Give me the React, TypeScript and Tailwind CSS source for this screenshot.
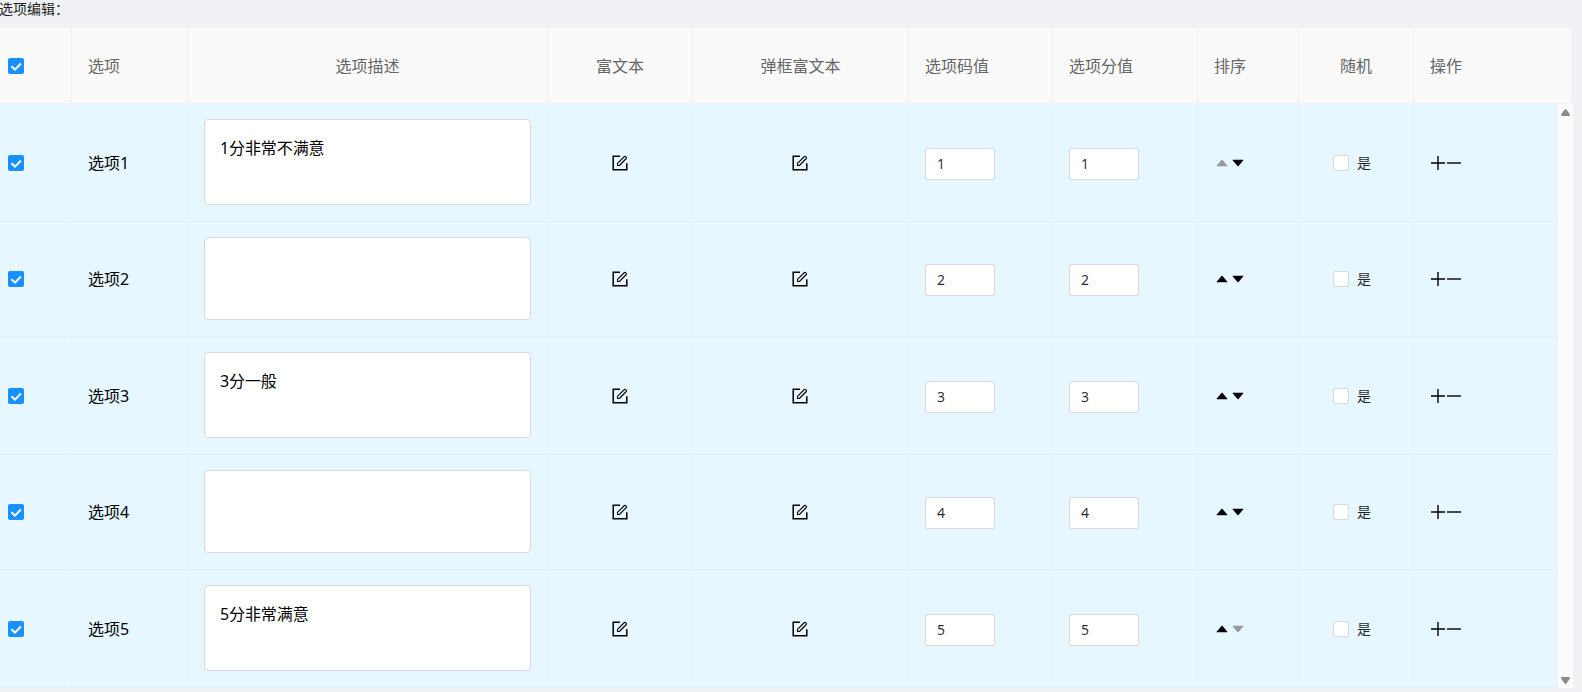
import { useState } from "react";
import type { ReactNode } from "react";
import { AiFillCaretDown, AiFillCaretUp } from "react-icons/ai";

interface OptionRow {
  id: number;
  label: string;
  desc: string;
  code: string;
  score: string;
}

const initialRows: OptionRow[] = [
  { id: 1, label: "选项1", desc: "1分非常不满意", code: "1", score: "1" },
  { id: 2, label: "选项2", desc: "", code: "2", score: "2" },
  { id: 3, label: "选项3", desc: "3分一般", code: "3", score: "3" },
  { id: 4, label: "选项4", desc: "", code: "4", score: "4" },
  { id: 5, label: "选项5", desc: "5分非常满意", code: "5", score: "5" },
];

const GRID = "grid grid-cols-[72px_116px_360px_145px_216px_144px_145px_101px_115px_144px]";

function CheckedBox() {
  return (
    <span className="flex h-4 w-4 items-center justify-center rounded-[2px] bg-[#1890ff]">
      <svg width="16" height="16" viewBox="0 0 16 16" fill="none" stroke="#fff" strokeWidth="2">
        <path d="M3.4 8.3 L7 11.6 L12.9 5.5" />
      </svg>
    </span>
  );
}

// 方框 + 空心铅笔
function EditIcon() {
  return (
    <svg className="mr-px" width="16" height="16" viewBox="0 0 16 16" fill="none" stroke="currentColor">
      <path d="M8 1.2 H1.2 V14.8 H14.8 V8.3" strokeWidth="1.5" />
      <path d="M5.5 10.5 V8.4 L12.4 1.5 Q13.2 0.9 14 1.8 Q15 2.7 14.3 3.5 L7.4 10.5 Z" strokeWidth="1.1" strokeLinejoin="round" />
    </svg>
  );
}

function HeadCell({ children, center, last }: { children?: ReactNode; center?: boolean; last?: boolean }) {
  return (
    <div
      className={`flex items-center px-4 ${center ? "justify-center" : ""} ${last ? "" : "border-r border-[#f0f0f0]"}`}
    >
      {children}
    </div>
  );
}

function Cell({ children, center }: { children?: ReactNode; center?: boolean }) {
  return (
    <div className={`flex items-center border-r border-[#ebf1f4] px-4 ${center ? "justify-center" : ""}`}>
      {children}
    </div>
  );
}

function NumberInput({ value }: { value: string }) {
  return (
    <input
      className="mt-[2px] h-8 w-[70px] rounded-[2px] border border-[#d9d9d9] bg-white px-[11px] pb-px text-sm text-black/85 outline-none"
      defaultValue={value}
    />
  );
}

export default function App() {
  const [rows] = useState(initialRows);

  return (
    <div className="h-[692px] w-[1582px] overflow-hidden bg-[#f0f1f5] font-['Noto_Sans','Noto_Sans_CJK_SC',sans-serif] text-base text-black">
      <div className="-ml-px h-[27px] text-sm leading-[17px] text-black/90">选项编辑：</div>

      {/* 表头 */}
      <div className="h-[77px] w-[1572px] border-t border-r border-b border-[#f0f0f0] bg-[#fafafa] text-[#666]">
        <div className={`${GRID} h-full`}>
          <div className="flex items-center border-r border-[#f0f0f0] pl-2">
            <CheckedBox />
          </div>
          <HeadCell>选项</HeadCell>
          <HeadCell center>选项描述</HeadCell>
          <HeadCell center>富文本</HeadCell>
          <HeadCell center>弹框富文本</HeadCell>
          <HeadCell>选项码值</HeadCell>
          <HeadCell>选项分值</HeadCell>
          <HeadCell>排序</HeadCell>
          <HeadCell center>随机</HeadCell>
          <HeadCell last>操作</HeadCell>
        </div>
      </div>

      {/* 表体 + 滚动条 */}
      <div className="flex w-[1573px]">
        <div className="w-[1558px]">
          {rows.map((row, i) => (
            <div
              key={row.id}
              className={`${GRID} ${row.desc ? "h-[118px]" : "h-[115px]"} border-b border-[#dfeef5] bg-[#e6f7ff]`}
            >
              <div className="flex items-center border-r border-[#ebf1f4] pl-2">
                <CheckedBox />
              </div>
              <Cell>{row.label}</Cell>
              <div className="border-r border-[#ebf1f4] px-4 pt-[15px] pb-4">
                <div className="h-full w-[327px] rounded border border-[#d9d9d9] bg-white px-[15px] pt-4 leading-6 tracking-[-0.1px]">
                  {row.desc}
                </div>
              </div>
              <Cell center>
                <EditIcon />
              </Cell>
              <Cell center>
                <EditIcon />
              </Cell>
              <Cell>
                <NumberInput value={row.code} />
              </Cell>
              <Cell>
                <NumberInput value={row.score} />
              </Cell>
              <Cell>
                <AiFillCaretUp size={16} className={i === 0 ? "text-[#999]" : ""} />
                <AiFillCaretDown size={16} className={i === rows.length - 1 ? "text-[#999]" : ""} />
              </Cell>
              <Cell center>
                <span className="h-4 w-4 rounded-[2px] border border-[#d9d9d9] bg-white" />
                <span className="px-2 text-sm text-black/85">是</span>
              </Cell>
              <Cell>
                <svg width="16" height="16" viewBox="0 0 16 16" stroke="currentColor" strokeWidth="1.4">
                  <path d="M1 8 H15 M8 1 V15" />
                </svg>
                <svg width="16" height="16" viewBox="0 0 16 16" stroke="currentColor" strokeWidth="1.4">
                  <path d="M1 8 H15" />
                </svg>
              </Cell>
            </div>
          ))}
        </div>
        <div className="flex w-[15px] flex-col items-center justify-between bg-[#fcfcfc] pt-[5px] pb-1">
          <svg width="9" height="7" viewBox="0 0 9 7" fill="#8b8b8b">
            <path d="M3.6 0.5 Q4.5 -0.5 5.4 0.5 L8.8 5.2 Q9.2 7 8 7 H1 Q-0.2 7 0.2 5.2 Z" />
          </svg>
          <svg width="9" height="7" viewBox="0 0 9 7" fill="#8b8b8b">
            <path d="M3.6 6.5 Q4.5 7.5 5.4 6.5 L8.8 1.8 Q9.2 0 8 0 H1 Q-0.2 0 0.2 1.8 Z" />
          </svg>
        </div>
      </div>
    </div>
  );
}
